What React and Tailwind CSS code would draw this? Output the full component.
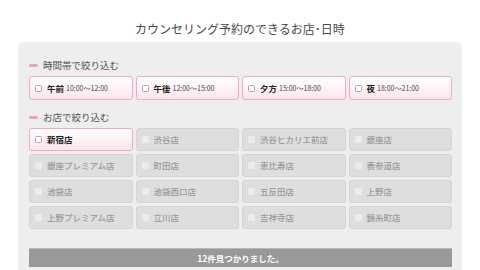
const times = [
  { label: '午前', range: '10:00〜12:00' },
  { label: '午後', range: '12:00〜15:00' },
  { label: '夕方', range: '15:00〜18:00' },
  { label: '夜', range: '18:00〜21:00' },
]

const stores = [
  { name: '新宿店', active: true },
  { name: '渋谷店' },
  { name: '渋谷ヒカリエ前店' },
  { name: '銀座店' },
  { name: '銀座プレミアム店' },
  { name: '町田店' },
  { name: '恵比寿店' },
  { name: '表参道店' },
  { name: '池袋店' },
  { name: '池袋西口店' },
  { name: '五反田店' },
  { name: '上野店' },
  { name: '上野プレミアム店' },
  { name: '立川店' },
  { name: '吉祥寺店' },
  { name: '錦糸町店' },
]

function SectionTitle({ children }) {
  return (
    <div className="flex items-center gap-[5px] h-[12px]">
      <span className="w-[9px] h-[3px] rounded-full bg-[#f29ec0]" />
      <span className="text-[9.5px] leading-[12px] text-[#555]">{children}</span>
    </div>
  )
}

function Check({ disabled }) {
  return disabled ? (
    <span className="w-[7px] h-[7px] rounded-[1.5px] bg-[#ececec] shrink-0" />
  ) : (
    <span className="w-[7px] h-[7px] rounded-[1.5px] bg-white border border-[#a8a8a8] shrink-0" />
  )
}

export default function App() {
  return (
    <div
      className="w-[480px] h-[270px] overflow-hidden bg-white"
      style={{ fontFamily: '"Noto Sans CJK JP", "Noto Sans", sans-serif' }}
    >
      <h1 className="pt-[21px] h-[37px] text-center text-[12px] leading-[16px] text-[#4a4a4a]">
        カウンセリング予約のできるお店･日時
      </h1>

      <div className="mx-[18px] mt-[5px] h-[240px] rounded-t-[6px] bg-[#eeeeee] pl-[11px] pr-[10px] pt-[17px]">
        {/* 時間帯 */}
        <SectionTitle>時間帯で絞り込む</SectionTitle>
        <div className="mt-[5px] grid grid-cols-4 gap-x-[3px]">
          {times.map((t) => (
            <div
              key={t.label}
              className="h-[24px] flex items-center pl-[5px] rounded-[3px] border border-[#f2a9c8] bg-gradient-to-b from-white to-[#fce6ef]"
            >
              <Check />
              <span className="ml-[5px] text-[8.5px] font-bold text-[#222]">{t.label}</span>
              <span className="ml-[2px] text-[7px] text-[#444]">{t.range}</span>
            </div>
          ))}
        </div>

        {/* お店 */}
        <div className="mt-[11px]">
          <SectionTitle>お店で絞り込む</SectionTitle>
        </div>
        <div className="mt-[5px] grid grid-cols-4 gap-x-[3px] gap-y-[3px]">
          {stores.map((s) =>
            s.active ? (
              <div
                key={s.name}
                className="h-[23px] flex items-center gap-[5px] pl-[5px] rounded-[3px] border border-[#f2a9c8] bg-gradient-to-b from-white to-[#fce6ef]"
              >
                <Check />
                <span className="text-[8.5px] font-bold text-[#222]">{s.name}</span>
              </div>
            ) : (
              <div
                key={s.name}
                className="h-[23px] flex items-center gap-[5px] pl-[5px] rounded-[3px] border border-[#d4d4d4] bg-[#dedede]"
              >
                <Check disabled />
                <span className="text-[8.5px] font-medium text-[#999]">{s.name}</span>
              </div>
            )
          )}
        </div>

        {/* 結果 */}
        <div className="mt-[19px] h-[19px] flex items-center justify-center border-t border-[#b8b8b8] bg-[#999999]">
          <span className="text-[8.5px] font-bold text-white">12件見つかりました。</span>
        </div>
      </div>
    </div>
  )
}
